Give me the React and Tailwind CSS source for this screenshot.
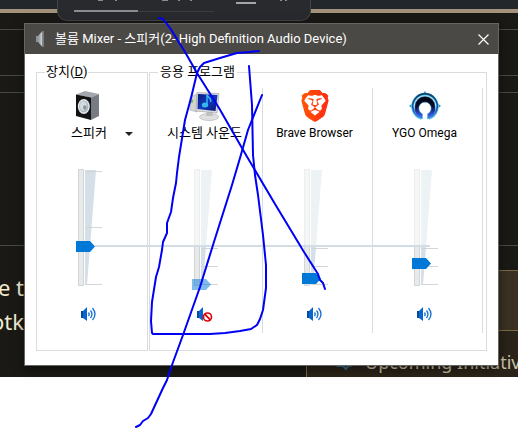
import React from 'react';
import { SiBrave } from 'react-icons/si';

const UI_FONT = "font-['Roboto','Noto_Sans_CJK_KR',sans-serif]";

function TitleSpeakerIcon() {
  return (
    <svg width="16" height="18" viewBox="0 0 16 18" aria-hidden="true">
      <defs>
        <linearGradient id="cone" x1="0" x2="1">
          <stop offset="0" stopColor="#8d9194" />
          <stop offset="1" stopColor="#d8dbdd" />
        </linearGradient>
      </defs>
      <path d="M3 6h2v6H3z" fill="#8b9499" />
      <path d="M5 6L9.500 1v16L5 12z" fill="url(#cone)" />
      <path d="M9.500 1H11v16H9.500z" fill="#777a7c" />
    </svg>
  );
}

function SpeakerBoxIcon() {
  return (
    <svg width="26" height="30" viewBox="0 0 26 30" aria-hidden="true">
      <path d="M0 3.500L9 0l14 3-8 3.500z" fill="#a3a8b0" />
      <path d="M15 6.500L23 3v22l-8 4z" fill="#777b84" />
      <path d="M0 3.500l15 3V29L0 25z" fill="#111214" />
      <ellipse cx="7.800" cy="15.500" rx="6" ry="7.600" fill="#e4e8eb" />
      <ellipse cx="7.800" cy="15.500" rx="4.600" ry="6" fill="#aeb8bf" />
      <ellipse cx="7.400" cy="15" rx="3.400" ry="4.600" fill="#d4dce1" />
      <ellipse cx="8.800" cy="16.500" rx="1.800" ry="2.300" fill="#8a969e" />
    </svg>
  );
}

function MonitorIcon() {
  return (
    <svg width="32" height="30" viewBox="0 0 32 30" aria-hidden="true">
      <defs>
        <linearGradient id="screen" x1="0" x2="1" y1="0" y2="1">
          <stop offset="0" stopColor="#0a1a7c" />
          <stop offset=".5" stopColor="#1038bd" />
          <stop offset="1" stopColor="#0a1670" />
        </linearGradient>
      </defs>
      <path d="M1 6l7-3v18l-7-2z" fill="#d2d4d1" stroke="#a9aba8" strokeWidth=".6" />
      <path d="M1.500 9l2.500-.5v3L1.500 12z" fill="#62c431" />
      <ellipse cx="20" cy="26" rx="9.500" ry="3.500" fill="#dfe1e1" stroke="#b3b5b6" strokeWidth=".7" />
      <path d="M18 19h5l1 6h-7z" fill="#bfc2c3" />
      <path d="M8 1.500l22 1L28 22 7 20z" fill="#d9dbdd" stroke="#9b9ea1" strokeWidth=".6" />
      <path d="M9 3l19.500 1L26.500 20 8.500 18z" fill="url(#screen)" />
      <path d="M18 4v10" stroke="#35b6ef" strokeWidth="1.500" />
      <path d="M18 4c1 3 5 3 3.500 7" stroke="#35b6ef" strokeWidth="1.500" fill="none" />
      <ellipse cx="16" cy="14" rx="3.200" ry="2.500" fill="#35b6ef" />
    </svg>
  );
}

function BraveIcon() {
  return (
    <svg width="32" height="32" viewBox="0 0 32 32" aria-hidden="true">
      <defs>
        <linearGradient id="brave" gradientUnits="userSpaceOnUse" x1="0" x2="24" y1="12" y2="12">
          <stop offset="0" stopColor="#ff5a00" />
          <stop offset="1" stopColor="#ff2617" />
        </linearGradient>
      </defs>
      <SiBrave size={32} style={{ fill: 'url(#brave)' }} />
    </svg>
  );
}

function OmegaIcon() {
  return (
    <svg width="32" height="30" viewBox="0 0 32 30" aria-hidden="true">
      <defs>
        <linearGradient id="omega" x1="0" x2="0" y1="0" y2="1">
          <stop offset="0" stopColor="#02040c" />
          <stop offset=".45" stopColor="#060d30" />
          <stop offset=".75" stopColor="#2b49c8" />
          <stop offset="1" stopColor="#4a86f5" />
        </linearGradient>
        <linearGradient id="ring" x1="0" x2="0" y1="0" y2="1">
          <stop offset="0" stopColor="#123e66" />
          <stop offset=".6" stopColor="#1d4fb0" />
          <stop offset="1" stopColor="#3f74ea" />
        </linearGradient>
      </defs>
      <path d="M16 0l3 4h-6zM0 15l4-3v6zM32 15l-4-3v6z" fill="#2496c9" />
      <path d="M12.500 27.300A12.300 12.300 0 1 1 19.500 27.300" fill="none" stroke="#5fd3ee" strokeWidth="3" />
      <path d="M12.500 27A12.300 12.300 0 1 1 19.500 27" fill="none" stroke="url(#ring)" strokeWidth="1.600" />
      <path
        d="M13.500 28v-5a6.200 6.200 0 1 1 5 0v5A10.500 10.500 0 0 0 26.200 15.500a10.200 10.200 0 0 0-20.400 0A10.500 10.500 0 0 0 13.500 28z"
        fill="url(#omega)"
        stroke="#4fb4e4"
        strokeWidth=".5"
      />
    </svg>
  );
}

function VolumeIcon({ muted }) {
  return (
    <svg width="16" height="16" viewBox="0 0 16 16" aria-hidden="true">
      <path d="M0 5h2v7H0z" fill="#064a9c" />
      <path d="M2 5l4-4v14l-4-3z" fill="#0a66cf" />
      {muted ? (
        <g>
          <circle cx="10.500" cy="11" r="4" fill="#fff" stroke="#e00000" strokeWidth="1.600" />
          <path d="M7.700 8.200l5.600 5.600" stroke="#e00000" strokeWidth="1.800" />
        </g>
      ) : (
        <g fill="none" stroke="#1670d3" strokeWidth="1.300">
          <path d="M7.500 6.500q1.500 1.500 0 3.500" />
          <path d="M9.500 4.500q3 3.500 0 7.500" />
          <path d="M11.500 2q5 6 0 12" />
        </g>
      )}
    </svg>
  );
}

function VolumeSlider({ name, thumb, master, muted }) {
  const ticks = master ? [5, 61, 118] : [82, 100, 118];
  return (
    <div className="relative mt-6 h-32 w-full">
      <svg width="110" height="128" viewBox="0 0 110 128" aria-hidden="true">
        <path d="M41.500 3.500h5v116h-5z" fill="#e6eaea" stroke="#d3d5d5" />
        <path d="M48 4h11L50 119h-2z" fill="#d5dfe8" />
        {!master && <path d="M40 2h20v78H40z" fill="#fff" opacity=".58" />}
        {ticks.map((y) => (
          <path key={y} d={`M48 ${y + 0.5}h17`} stroke="#d3d5d5" />
        ))}
        <path d={`M39 ${thumb}h14l5 5.500l-5 5.500h-14z`} fill="#0078d7" opacity={muted ? 0.5 : 1} />
      </svg>
      <input
        type="range"
        aria-label={name}
        min="0"
        max="118"
        defaultValue={118 - thumb}
        className="absolute top-0 left-9 h-32 w-7 cursor-pointer opacity-0 [direction:rtl] [writing-mode:vertical-lr]"
      />
    </div>
  );
}

function Channel({ name, icon, thumb, master, muted, latin }) {
  return (
    <div
      className={`flex w-[110px] flex-col items-center pb-[11px] ${master ? '' : 'border-r border-[#d3dde6]'}`}
    >
      <div className="flex h-9 w-full items-center justify-center pr-1.5">{icon}</div>
      <div
        className={`relative w-full pr-1.5 text-center leading-[18px] whitespace-nowrap ${latin ? 'text-[12px]' : ''}`}
      >
        {name}
        {master && (
          <button
            type="button"
            aria-label="장치 선택"
            className="absolute top-2 right-3.5 border-x-4 border-t-4 border-x-transparent border-t-[#222]"
          />
        )}
      </div>
      <VolumeSlider name={name} thumb={thumb} master={master} muted={muted} />
      <button type="button" aria-label={`${name} 음소거`} className="mt-3 mr-1.5 h-4 w-4">
        <VolumeIcon muted={muted} />
      </button>
    </div>
  );
}

function MixerWindow() {
  return (
    <section
      className={`absolute top-[23px] right-[19px] left-6 border border-[#666564] bg-white text-[13px] text-black shadow-[0_3px_10px_rgba(0,0,0,0.5)] ${UI_FONT}`}
    >
      <header className="flex h-[30px] items-center bg-[#4b4946] pl-2 text-white">
        <TitleSpeakerIcon />
        <h1 className="ml-1.5 flex-1 whitespace-nowrap">볼륨 Mixer - 스피커(2- High Definition Audio Device)</h1>
        <button type="button" aria-label="닫기" className="flex h-full w-[30px] items-center justify-center">
          <svg width="11" height="11" viewBox="0 0 11 11" aria-hidden="true">
            <path d="M.5.5l10 10M10.500.5l-10 10" stroke="#fff" strokeWidth="1.200" />
          </svg>
        </button>
      </header>
      <div className="relative flex gap-px px-[11px] pt-2.5 pb-3.5">
        <fieldset className="border border-[#dcdcdc] pb-[17px]">
          <legend className="ml-2 px-px leading-4">
            장치(<u>D</u>)
          </legend>
          <div className="pt-2">
            <Channel name="스피커" icon={<SpeakerBoxIcon />} thumb={75} master />
          </div>
        </fieldset>
        <fieldset className="flex-1 border border-[#dcdcdc] pb-[17px]">
          <legend className="ml-2 px-0.5 leading-4">응용 프로그램</legend>
          <div className="flex pt-2 pl-[3px]">
            <Channel name="시스템 사운드" icon={<MonitorIcon />} thumb={113} muted />
            <Channel name="Brave Browser" icon={<BraveIcon />} thumb={107} latin />
            <Channel name="YGO Omega" icon={<OmegaIcon />} thumb={92} latin />
          </div>
        </fieldset>
        <div className="absolute top-[191px] right-[68px] left-[70px] h-0.5 bg-[#d3dde6]" />
      </div>
    </section>
  );
}

function PlayerPopup() {
  return (
    <div className="absolute top-0 left-[57px] h-[21px] w-[254px] rounded-b-[10px] border border-t-0 border-[#434448] bg-[#292a2e]">
      <div className="flex items-start pl-4">
        <div className="mt-2.5 h-0.5 w-16 bg-[#8b8b93]" />
        <div className="mt-[11px] h-px w-[76px] bg-[#3c3d42]" />
        <div className="mt-0.5 ml-[22px] h-0.5 w-5 bg-[#a5a5aa]" />
      </div>
      <svg className="absolute top-0 left-0" width="240" height="2" viewBox="0 0 240 2" aria-hidden="true">
        <path d="M40 .5h5M57 .5h2M104 .5h6M120 .5h2M132 .5h2M222 .5h2M227 .5h2" stroke="#8b8b93" />
      </svg>
    </div>
  );
}

function Backdrop() {
  return (
    <main className="h-[377px] overflow-hidden bg-[#1a1915] font-['Noto_Sans',sans-serif]">
      <div className="h-[9px] bg-[#22272c]" />
      <div className="h-1 bg-[#a3937a]" />
      <div className="h-4" />
      <div className="h-[46px] border-t border-[#4a4945]" />
      <div className="h-[17px] border-t border-[#4a4945]" />
      <div className="h-[153px] border-t border-[#4a4945]" />
      <div className="h-[25px] border-t border-[#4a4945]" />
      <div className="flex">
        <div className="w-[306px] shrink-0 text-[22px] leading-[34px] text-[#f0ecd0]">
          <div className="flex w-6 flex-col items-end">
            <p className="whitespace-nowrap">e t</p>
            <p>otk</p>
          </div>
        </div>
        <aside className="min-w-0 flex-1 border-l border-[#7d6a45] bg-[#2a2319]">
          <div className="h-[61px] border-y border-[#7d6a45] bg-[#3a3122]" />
          <div className="flex items-center gap-3 pt-[15px] pl-7 text-[18px] leading-8 whitespace-nowrap text-[#cfc5a8]">
            <svg
              width="18"
              height="18"
              viewBox="0 0 18 18"
              fill="none"
              stroke="#35708f"
              strokeWidth="2"
              className="shrink-0"
              aria-hidden="true"
            >
              <path d="M3 1h12q2 0 2 2v8q0 2-2 2h-2l-2 3-3-3H3q-2 0-2-2V3q0-2 2-2z" />
            </svg>
            <span>Upcoming Initiatives</span>
          </div>
        </aside>
      </div>
    </main>
  );
}

function PenMarks() {
  return (
    <svg
      className="pointer-events-none absolute top-0 left-0"
      width="518"
      height="428"
      viewBox="0 0 518 428"
      fill="none"
      stroke="#0000f5"
      strokeWidth="2"
      strokeLinejoin="round"
      strokeLinecap="round"
      aria-hidden="true"
    >
      <path d="M159 18L163 19L170 28L185 52L197 73L219 108L246 155L275 204L304 252L318 274L320 280L323 283L325 289" />
      <path d="M259 51L250 52L237 53L220 58L204 63L200 67L197 73L191 98L185 120L179 157L177 173L176 183L173 198L171 212L167 223L167 233L163 242L162 250L159 267L156 277L152 302L151 321L152 333L153 334L210 334L225 333L240 331L251 329L257 325L260 319L263 310L266 288L266 265L263 235L258 195L255 175L253 155L252 105L249 66" />
      <path d="M262 95L248 130L240 158L232 185L213 245L200 287L183 335L172 365L167 380L163 388L151 414L148 418L143 421L140 425L136 427" />
    </svg>
  );
}

export default function App() {
  return (
    <div className="relative min-h-screen overflow-hidden bg-white">
      <Backdrop />
      <PlayerPopup />
      <MixerWindow />
      <PenMarks />
    </div>
  );
}
